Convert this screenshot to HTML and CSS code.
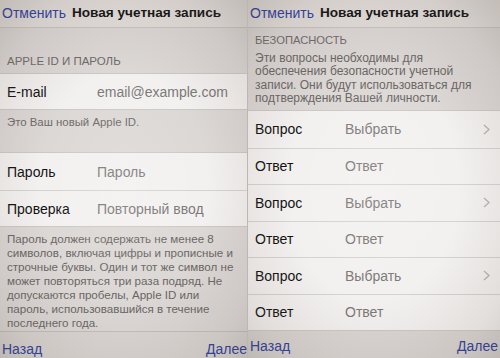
FILE: index.html
```html
<!DOCTYPE html>
<html lang="ru">
<head>
<meta charset="utf-8">
<title>Новая учетная запись</title>
<link rel="stylesheet" href="styles.css">
</head>
<body>
<div class="app">
  <section class="screen screen-left">
    <header class="nav">
      <span class="nav-link">Отменить</span>
      <span class="nav-title">Новая учетная запись</span>
    </header>
    <div class="group-head group-head-apple">APPLE ID И ПАРОЛЬ</div>
    <div class="group">
      <div class="row row-email"><span class="label">E-mail</span><span class="value">email@example.com</span></div>
    </div>
    <div class="note">Это Ваш новый Apple ID.</div>
    <div class="group group-pass">
      <div class="row row-pass"><span class="label">Пароль</span><span class="value">Пароль</span></div>
      <div class="row row-pass"><span class="label">Проверка</span><span class="value">Повторный ввод</span></div>
    </div>
    <p class="footer-text">Пароль должен содержать не менее 8<br>символов, включая цифры и прописные и<br>строчные буквы. Один и тот же символ не<br>может повторяться три раза подряд. Не<br>допускаются пробелы, Apple ID или<br>пароль, использовавшийся в течение<br>последнего года.</p>
    <footer class="toolbar toolbar-left">
      <span class="nav-link">Назад</span>
      <span class="nav-link">Далее</span>
    </footer>
    <div class="vignette"></div>
  </section>
  <section class="screen screen-right">
    <header class="nav">
      <span class="nav-link">Отменить</span>
      <span class="nav-title">Новая учетная запись</span>
    </header>
    <div class="sec-head">
      <div class="sec-title">БЕЗОПАСНОСТЬ</div>
      <p class="sec-desc">Эти вопросы необходимы для<br>обеспечения безопасности учетной<br>записи. Они будут использоваться для<br>подтверждения Вашей личности.</p>
    </div>
    <div class="group group-q">
      <div class="row row-q"><span class="label">Вопрос</span><span class="value">Выбрать</span><svg class="chev" width="7" height="11" viewBox="0 0 7 11"><polyline points="1,1 6,5.5 1,10" fill="none" stroke="#b9b5b3" stroke-width="1.4"/></svg></div>
      <div class="row row-q"><span class="label">Ответ</span><span class="value">Ответ</span></div>
      <div class="row row-q"><span class="label">Вопрос</span><span class="value">Выбрать</span><svg class="chev" width="7" height="11" viewBox="0 0 7 11"><polyline points="1,1 6,5.5 1,10" fill="none" stroke="#b9b5b3" stroke-width="1.4"/></svg></div>
      <div class="row row-q"><span class="label">Ответ</span><span class="value">Ответ</span></div>
      <div class="row row-q"><span class="label">Вопрос</span><span class="value">Выбрать</span><svg class="chev" width="7" height="11" viewBox="0 0 7 11"><polyline points="1,1 6,5.5 1,10" fill="none" stroke="#b9b5b3" stroke-width="1.4"/></svg></div>
      <div class="row row-q"><span class="label">Ответ</span><span class="value">Ответ</span></div>
    </div>
    <footer class="toolbar toolbar-right">
      <span class="nav-link">Назад</span>
      <span class="nav-link">Далее</span>
    </footer>
    <div class="vignette"></div>
  </section>
</div>
</body>
</html>
```

FILE: styles.css
```css
html, body {
  margin: 0;
  padding: 0;
  background: #d9d5d3;
}
body {
  font-family: "Liberation Sans", Arial, sans-serif;
  color: #141414;
  width: 500px;
  height: 358px;
  overflow: hidden;
}
.app {
  display: flex;
  width: 500px;
  height: 358px;
}
.screen {
  position: relative;
  display: flex;
  flex-direction: column;
  background: #dcd8d6;
  height: 358px;
  overflow: hidden;
}
.screen-left {
  width: 247px;
  border-right: 1px solid #bcb7b4;
}
.screen-right {
  width: 252px;
}
.nav {
  height: 28px;
  flex: none;
  box-sizing: border-box;
  display: flex;
  align-items: flex-start;
  gap: 6px;
  padding: 5px 0 0 2px;
  background: #e3dfdc;
  border-bottom: 1px solid #c9c4c1;
  white-space: nowrap;
  font-size: 14px;
  line-height: 16px;
}
.nav-link {
  color: #2b3c9e;
}
.nav-title {
  font-weight: bold;
  font-size: 13.6px;
  color: #111;
}
.group-head-apple {
  height: 46px;
  box-sizing: border-box;
  padding: 27px 0 0 7px;
  font-size: 11.5px;
  line-height: 13px;
  color: #6e6a68;
  border-bottom: 1px solid #cdc8c5;
}
.group {
  background: #f3f1f0;
  flex: none;
  border-bottom: 1px solid #cdc8c5;
}
.row {
  display: flex;
  align-items: center;
  box-sizing: border-box;
  padding-left: 7px;
  font-size: 14px;
  white-space: nowrap;
}
.row .label {
  width: 90px;
  flex: none;
  color: #111;
}
.row .value {
  color: #7b7877;
  flex: 1;
}
.row-email {
  height: 35px;
}
.note {
  height: 43px;
  box-sizing: border-box;
  padding: 6px 0 0 7px;
  font-size: 11.4px;
  line-height: 13px;
  color: #6e6a68;
  border-bottom: 1px solid #cdc8c5;
}
.row-pass {
  height: 37px;
}
.row-pass + .row-pass {
  border-top: 1px solid #d6d2cf;
  height: 36px;
}
.footer-text {
  margin: 0;
  height: 105px;
  box-sizing: border-box;
  padding: 5px 0 0 7px;
  font-size: 11.6px;
  line-height: 14px;
  color: #6a6664;
  white-space: nowrap;
  border-bottom: 1px solid #c4bfbc;
}
.toolbar {
  flex: 1;
  display: flex;
  justify-content: space-between;
  align-items: flex-start;
  padding: 9px 0 0 2px;
  font-size: 14px;
  line-height: 16px;
  background: #dad6d3;
}
.toolbar-right {
  padding-top: 7px;
  padding-right: 2px;
}
.sec-head {
  height: 83px;
  box-sizing: border-box;
  padding: 6px 0 0 7px;
  border-bottom: 1px solid #cdc8c5;
  flex: none;
}
.sec-title {
  font-size: 11.2px;
  line-height: 13px;
  color: #6e6a68;
}
.sec-desc {
  margin: 5px 0 0;
  font-size: 12px;
  line-height: 13.4px;
  color: #6a6664;
  white-space: nowrap;
}
.row-q {
  height: 36.5px;
  padding-right: 10px;
}
.row-q + .row-q {
  border-top: 1px solid #d6d2cf;
}
.chev {
  flex: none;
}
.vignette {
  position: absolute;
  inset: 0;
  pointer-events: none;
  background: radial-gradient(ellipse 75% 70% at 50% 52%, rgba(255,255,255,0.14) 0%, rgba(255,255,255,0) 45%, rgba(110,95,85,0.13) 80%, rgba(90,75,65,0.24) 100%);
}
```
